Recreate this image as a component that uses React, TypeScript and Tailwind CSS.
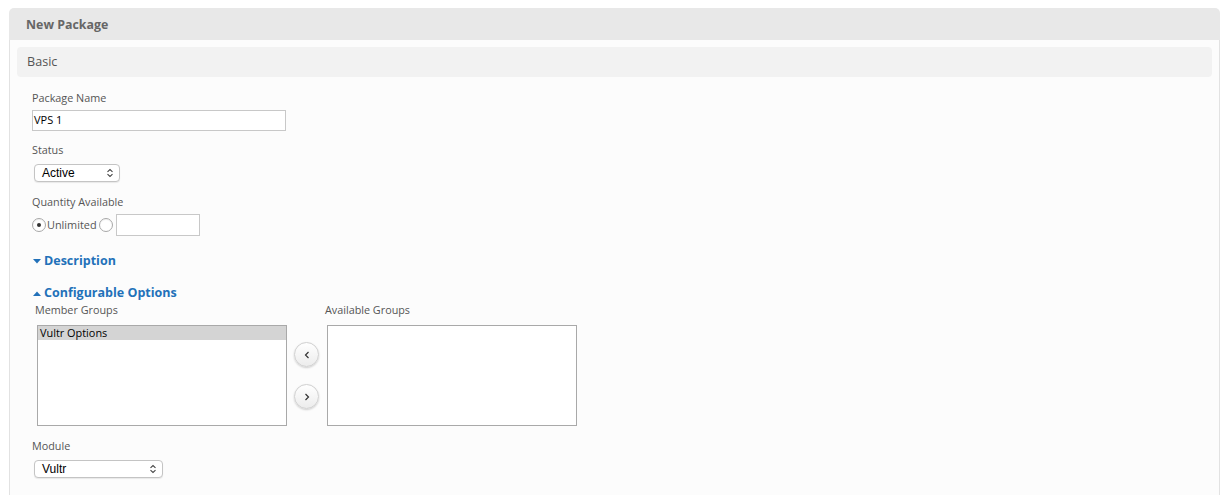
import React from "react";

const font = { fontFamily: '"Open Sans", "Liberation Sans", sans-serif' };

function Chevrons() {
  return (
    <svg width="8" height="10" viewBox="0 0 8 10" className="shrink-0">
      <path d="M1.5 3.8 L4 1.5 L6.5 3.8" fill="none" stroke="#444" strokeWidth="1.1" />
      <path d="M1.5 6.2 L4 8.5 L6.5 6.2" fill="none" stroke="#444" strokeWidth="1.1" />
    </svg>
  );
}

function FakeSelect({ value, width }: { value: string; width: string }) {
  return (
    <div
      className={`${width} h-[18px] flex items-center justify-between pl-[7px] pr-[5px] rounded-[4px] border border-[#c4c4c4] bg-white shadow-[0_1px_1px_rgba(0,0,0,0.08)] text-[12px] text-black`}
      style={{ fontFamily: '"Liberation Sans", Arial, sans-serif' }}
    >
      <span>{value}</span>
      <Chevrons />
    </div>
  );
}

function Radio({ checked }: { checked?: boolean }) {
  return (
    <span className="w-[14px] h-[14px] rounded-full border border-[#a8a8a8] bg-white flex items-center justify-center shadow-[inset_0_1px_1px_rgba(0,0,0,0.06)]">
      {checked && <span className="w-[4px] h-[4px] rounded-full bg-[#333]" />}
    </span>
  );
}

function CircleBtn({ dir }: { dir: "l" | "r" }) {
  return (
    <div className="w-[25px] h-[25px] rounded-full border border-[#d0d0d0] bg-gradient-to-b from-white to-[#ececec] shadow-[0_1px_2px_rgba(0,0,0,0.18)] flex items-center justify-center">
      <svg width="6" height="8" viewBox="0 0 6 8">
        {dir === "l" ? (
          <path d="M4.5 1 L1.5 4 L4.5 7" fill="none" stroke="#333" strokeWidth="1.2" />
        ) : (
          <path d="M1.5 1 L4.5 4 L1.5 7" fill="none" stroke="#333" strokeWidth="1.2" />
        )}
      </svg>
    </div>
  );
}

export default function App() {
  return (
    <div className="bg-white min-h-[495px] pt-[8px] pl-[9px] pr-[10px] overflow-hidden" style={font}>
      <div className="rounded-t-[5px] overflow-hidden">
        <div className="h-[32px] bg-[#e8e8e8] flex items-center pl-[17px] pt-[2px] text-[12.4px] font-bold text-[#666]">
          New Package
        </div>
        <div className="bg-[#fcfcfc] border-x border-[#e2e2e2] px-[7px] pt-[7px] pb-[40px] min-h-[460px]">
          <div className="h-[30px] bg-[#f2f2f2] rounded-[4px] flex items-center pl-[10px] pt-[1px] text-[12.6px] text-[#555]">
            Basic
          </div>
          <div className="pl-[15px] text-[10.8px] text-[#555]">
            <div className="mt-[13px] leading-[16px]">Package Name</div>
            <div className="mt-[4px] w-[254px] h-[21px] border border-[#c8c8c8] bg-white flex items-center pl-[1px] text-[11px] text-black">
              VPS 1
            </div>

            <div className="mt-[11px] leading-[16px]">Status</div>
            <div className="mt-[6px] ml-[2px]">
              <FakeSelect value="Active" width="w-[86px]" />
            </div>

            <div className="mt-[12px] leading-[16px]">Quantity Available</div>
            <div className="mt-[4px] flex items-center h-[22px]">
              <Radio checked />
              <span className="ml-[1px] text-[10.9px] text-[#555]">Unlimited</span>
              <span className="ml-[2px]"><Radio /></span>
              <div className="ml-[3px] w-[84px] h-[22px] border border-[#c8c8c8] bg-white" />
            </div>

            <div className="mt-[16px] h-[18px] flex items-center text-[12.5px] font-bold text-[#2271b9]">
              <svg width="8" height="5" viewBox="0 0 8 5" className="ml-[1px] mr-[3px]">
                <path d="M0 0 L8 0 L4 4.5 Z" fill="#2271b9" />
              </svg>
              Description
            </div>

            <div className="mt-[14px] h-[18px] flex items-center text-[12.5px] font-bold text-[#2271b9]">
              <svg width="8" height="5" viewBox="0 0 8 5" className="ml-[1px] mr-[3px]">
                <path d="M0 5 L8 5 L4 0.5 Z" fill="#2271b9" />
              </svg>
              Configurable Options
            </div>

            <div className="flex mt-0 ml-[3px]">
              <div>
                <div className="leading-[16px]">Member Groups</div>
                <div className="mt-[7px] ml-[2px] w-[250px] h-[101px] border border-[#a9a9a9] bg-white">
                  <div className="h-[14px] bg-[#d4d4d4] text-black text-[10.9px] leading-[14px] pl-[2px]">
                    Vultr Options
                  </div>
                </div>
              </div>
              <div className="ml-[7px] mt-[40px] flex flex-col gap-[17px]">
                <CircleBtn dir="l" />
                <CircleBtn dir="r" />
              </div>
              <div className="ml-[6px]">
                <div className="leading-[16px]">Available Groups</div>
                <div className="mt-[7px] ml-[2px] w-[250px] h-[101px] border border-[#a9a9a9] bg-white" />
              </div>
            </div>

            <div className="mt-[12px] leading-[16px]">Module</div>
            <div className="mt-[6px] ml-[2px]">
              <FakeSelect value="Vultr" width="w-[129px]" />
            </div>
          </div>
        </div>
      </div>
    </div>
  );
}
